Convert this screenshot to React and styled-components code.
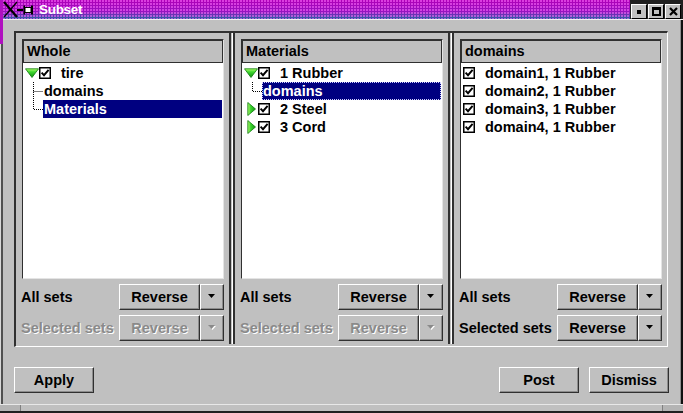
import React from 'react'
import styled, { createGlobalStyle } from 'styled-components'

const DARK = '#303030'
const GREY = '#c0c0c0'
const FONT = '"Liberation Sans", Arial, sans-serif'

const Global = createGlobalStyle`
  html, body { margin: 0; padding: 0; background: ${GREY}; }
  body { font-family: ${FONT}; }
`

const Window = styled.div`
  position: relative;
  width: 683px;
  height: 413px;
  box-sizing: border-box;
  display: flex;
  flex-direction: column;
  background: ${GREY};
  box-shadow: inset 1px 0 0 #d8d8d8, inset 3px 0 0 #505050,
    inset -2px 0 0 #101010, inset -3px 0 0 #909090;
  overflow: hidden;
  font: bold 14.5px ${FONT};
  color: #000;
  &::before {
    content: '';
    position: absolute;
    left: 0;
    top: 0;
    width: 3px;
    height: 44px;
    background: #b010c0;
  }
`

const TitleBar = styled.div`
  height: 19px;
  flex: none;
  display: flex;
  align-items: stretch;
  background:
    radial-gradient(circle at 1px 1px, rgba(255, 110, 255, 0.7) 0.6px, transparent 1.1px) 0 0 / 3px 3px,
    linear-gradient(#b000b8 0%, #9812c0 60%, #2a62a4 100%);
`

const TitleText = styled.div`
  color: #fff;
  font: bold 13.5px ${FONT};
  letter-spacing: -0.3px;
  line-height: 20px;
  margin-left: 3px;
  flex: 1;
`

const TitleButtons = styled.div`
  display: flex;
  align-items: flex-end;
  gap: 1px;
  padding: 3px 2px 0 1px;
  background: #202020;
`

const TitleButton = styled.div`
  width: 16px;
  height: 15px;
  box-sizing: border-box;
  background: ${GREY};
  border: 1px solid;
  border-color: #fff #000 #000 #fff;
  display: flex;
  align-items: center;
  justify-content: center;
`

const MinGlyph = styled.div`
  width: 4px;
  height: 4px;
  background: #000;
`

const MaxGlyph = styled.div`
  width: 9px;
  height: 9px;
  box-sizing: border-box;
  border: 2px solid #000;
  border-top-width: 3px;
`

const Body = styled.div`
  flex: 1;
  display: flex;
  flex-direction: column;
  border-top: 1px solid #f0f0f0;
  margin-left: 3px;
  padding: 11px 14px 0 11px;
`

const Frame = styled.div`
  width: 654px;
  height: 316px;
  box-sizing: border-box;
  border-style: solid;
  border-width: 2px 1px 1px 2px;
  border-color: ${DARK} #fff #fff ${DARK};
  display: flex;
`

const Sash = styled.div`
  width: 6px;
  flex: none;
  background: linear-gradient(to right, ${DARK} 0 2px, ${GREY} 2px 3px, #fff 3px 4px, ${DARK} 4px 6px);
  margin-bottom: 2px;
`

const Panel = styled.div`
  flex: 1;
  min-width: 0;
  display: flex;
  flex-direction: column;
  padding: 6px 5px 5px 6px;
`

const ListBox = styled.div`
  flex: 1;
  display: flex;
  flex-direction: column;
  border: 1px solid;
  border-color: ${DARK} #e4e4e4 #e4e4e4 ${DARK};
`

const Header = styled.div`
  height: 23px;
  box-sizing: border-box;
  border: 1px solid ${DARK};
  background: ${GREY};
  padding-left: 3px;
  line-height: 21px;
`

const List = styled.div`
  flex: 1;
  background: #fff;
  padding-top: 1px;
`

const Row = styled.div`
  height: 18px;
  display: flex;
  align-items: center;
  white-space: nowrap;
  padding-left: ${p => p.$indent || 0}px;
`

const ExpanderSlot = styled.div`
  width: 14px;
  margin-left: 2px;
  display: flex;
  justify-content: center;
  align-items: center;
`

const CheckSlot = styled.div`
  display: flex;
  margin-left: ${p => p.$ml || 0}px;
`

const Label = styled.span`
  margin-left: 10px;
`

const ItemLabel = styled.span`
  flex: 1;
  height: 18px;
  line-height: 18px;
  padding-left: 1px;
  margin-right: 1px;
  box-sizing: border-box;
  background: ${p => (p.$selected ? '#000080' : 'transparent')};
  color: ${p => (p.$selected ? '#fff' : '#000')};
  outline: ${p => (p.$focus ? '1px dotted #d0d0ff' : 'none')};
  outline-offset: -1px;
`

const Controls = styled.div`
  display: flex;
  flex-direction: column;
  gap: 5px;
  margin-top: 5px;
`

const ControlRow = styled.div`
  height: 26px;
  display: flex;
  align-items: center;
  justify-content: space-between;
`

const RowLabel = styled.span`
  margin-left: -1px;
  color: ${p => (p.$disabled ? '#8a8a8a' : '#000')};
  text-shadow: ${p => (p.$disabled ? '1px 1px 0 #fff' : 'none')};
`

const Split = styled.div`
  display: flex;
`

const Btn = styled.button`
  box-sizing: border-box;
  height: 26px;
  width: ${p => p.$w || 80}px;
  background: ${GREY};
  border: 1px solid;
  border-color: #fff ${DARK} ${DARK} #fff;
  box-shadow: inset -1px -1px 0 #8c8c8c;
  font: bold 14.5px ${FONT};
  color: #000;
  padding: 0 0 1px;
  display: flex;
  align-items: center;
  justify-content: center;
  cursor: default;
  &:disabled {
    color: #8a8a8a;
    text-shadow: 1px 1px 0 #fff;
  }
`

const Actions = styled.div`
  display: flex;
  gap: 10px;
  margin-top: 20px;
`

const Spacer = styled.div`
  flex: 1;
`

const BottomEdge = styled.div`
  height: 9px;
  flex: none;
  margin-top: auto;
  display: flex;
  box-sizing: border-box;
  border-top: 1px solid #e8e8e8;
  border-bottom: 2px solid #202020;
`

const Grip = styled.div`
  width: ${p => p.$w}px;
  flex: ${p => (p.$w ? 'none' : 1)};
  border-left: ${p => (p.$edge === 'left' ? '1px solid #808080' : 'none')};
  border-right: ${p => (p.$edge === 'right' ? '1px solid #808080' : 'none')};
  background: ${p => (p.$w ? '#b4b4b4' : 'transparent')};
`

const Logo = () => (
  <svg width="36" height="19" viewBox="0 0 36 19">
    <path d="M4 2 L17 17" stroke="#000" strokeWidth="2.2" />
    <path d="M17 2 L4 17" stroke="#000" strokeWidth="1.2" />
    <path d="M17 10 H23" stroke="#000" strokeWidth="2" />
    <rect x="23.5" y="5.5" width="1.5" height="9" fill="#000" />
    <rect x="25" y="7.5" width="6" height="5" fill="#fff" stroke="#000" strokeWidth="1" />
    <rect x="31" y="5.5" width="2" height="9" fill="#000" />
  </svg>
)

const CloseGlyph = () => (
  <svg width="9" height="9" viewBox="0 0 9 9">
    <path d="M1 1 L8 8 M8 1 L1 8" stroke="#000" strokeWidth="2.2" />
  </svg>
)

const CheckBox = () => (
  <svg width="12" height="12" viewBox="0 0 12 12">
    <rect x="0.75" y="0.75" width="10.5" height="10.5" fill="#fff" stroke="#000" strokeWidth="1.5" />
    <path d="M2.6 5.6 L5 8.2 L9.6 2.8" fill="none" stroke="#000" strokeWidth="1.9" />
  </svg>
)

const Expander = ({ open }) =>
  open ? (
    <svg width="14" height="10" viewBox="0 0 14 10">
      <defs>
        <linearGradient id="gd" x1="0" y1="0" x2="0" y2="1">
          <stop offset="0" stopColor="#b8ff70" />
          <stop offset="0.35" stopColor="#40d830" />
          <stop offset="1" stopColor="#109010" />
        </linearGradient>
      </defs>
      <polygon points="0.5,0.8 13.5,0.8 7,9.5" fill="url(#gd)" stroke="#0a7a0a" strokeWidth="0.8" />
    </svg>
  ) : (
    <svg width="9" height="14" viewBox="0 0 9 14">
      <defs>
        <linearGradient id="gr" x1="0" y1="0" x2="1" y2="0">
          <stop offset="0" stopColor="#b8ff70" />
          <stop offset="0.35" stopColor="#40d830" />
          <stop offset="1" stopColor="#109010" />
        </linearGradient>
      </defs>
      <polygon points="0.8,0.5 8.5,7 0.8,13.5" fill="url(#gr)" stroke="#0a7a0a" strokeWidth="0.8" />
    </svg>
  )

const Connector = ({ last }) => (
  <svg width="10" height="18" viewBox="0 0 10 18">
    <path
      d={last ? 'M0.5 0 V9.5 H10' : 'M0.5 0 V18 M0.5 9.5 H10'}
      fill="none"
      stroke="#000"
      strokeWidth="1"
      strokeDasharray="1 1"
    />
  </svg>
)

const DropArrow = ({ disabled }) => (
  <svg width="8" height="5" viewBox="0 0 8 5">
    {disabled && <polygon points="1,1 8,1 4.5,5" fill="#fff" />}
    <polygon points="0,0 7,0 3.5,4" fill={disabled ? '#8a8a8a' : '#000'} />
  </svg>
)

const TreeItem = ({ open, label }) => (
  <Row>
    <ExpanderSlot>
      <Expander open={open} />
    </ExpanderSlot>
    <CheckSlot>
      <CheckBox />
    </CheckSlot>
    <Label>{label}</Label>
  </Row>
)

const ChildItem = ({ label, last, selected, focus }) => (
  <Row $indent={10}>
    <Connector last={last} />
    <ItemLabel $selected={selected} $focus={focus}>
      {label}
    </ItemLabel>
  </Row>
)

const CheckItem = ({ label }) => (
  <Row>
    <CheckSlot $ml={2}>
      <CheckBox />
    </CheckSlot>
    <Label>{label}</Label>
  </Row>
)

const SetControls = ({ selectedEnabled }) => (
  <Controls>
    <ControlRow>
      <RowLabel>All sets</RowLabel>
      <Split>
        <Btn $w={81}>Reverse</Btn>
        <Btn $w={24}>
          <DropArrow />
        </Btn>
      </Split>
    </ControlRow>
    <ControlRow>
      <RowLabel $disabled={!selectedEnabled}>Selected sets</RowLabel>
      <Split>
        <Btn $w={81} disabled={!selectedEnabled}>
          Reverse
        </Btn>
        <Btn $w={24} disabled={!selectedEnabled}>
          <DropArrow disabled={!selectedEnabled} />
        </Btn>
      </Split>
    </ControlRow>
  </Controls>
)

const domains = ['domain1, 1 Rubber', 'domain2, 1 Rubber', 'domain3, 1 Rubber', 'domain4, 1 Rubber']

export default function App() {
  return (
    <>
      <Global />
      <Window>
        <TitleBar>
          <Logo />
          <TitleText>Subset</TitleText>
          <TitleButtons>
            <TitleButton>
              <MinGlyph />
            </TitleButton>
            <TitleButton>
              <MaxGlyph />
            </TitleButton>
            <TitleButton>
              <CloseGlyph />
            </TitleButton>
          </TitleButtons>
        </TitleBar>
        <Body>
          <Frame>
            <Panel>
              <ListBox>
                <Header>Whole</Header>
                <List>
                  <TreeItem open label="tire" />
                  <ChildItem label="domains" />
                  <ChildItem label="Materials" last selected />
                </List>
              </ListBox>
              <SetControls />
            </Panel>
            <Sash />
            <Panel>
              <ListBox>
                <Header>Materials</Header>
                <List>
                  <TreeItem open label="1 Rubber" />
                  <ChildItem label="domains" last selected focus />
                  <TreeItem label="2 Steel" />
                  <TreeItem label="3 Cord" />
                </List>
              </ListBox>
              <SetControls />
            </Panel>
            <Sash />
            <Panel>
              <ListBox>
                <Header>domains</Header>
                <List>
                  {domains.map(d => (
                    <CheckItem key={d} label={d} />
                  ))}
                </List>
              </ListBox>
              <SetControls selectedEnabled />
            </Panel>
          </Frame>
          <Actions>
            <Btn>Apply</Btn>
            <Spacer />
            <Btn>Post</Btn>
            <Btn>Dismiss</Btn>
          </Actions>
        </Body>
        <BottomEdge>
          <Grip $w={20} $edge="right" />
          <Grip />
          <Grip $w={20} $edge="left" />
        </BottomEdge>
      </Window>
    </>
  )
}
